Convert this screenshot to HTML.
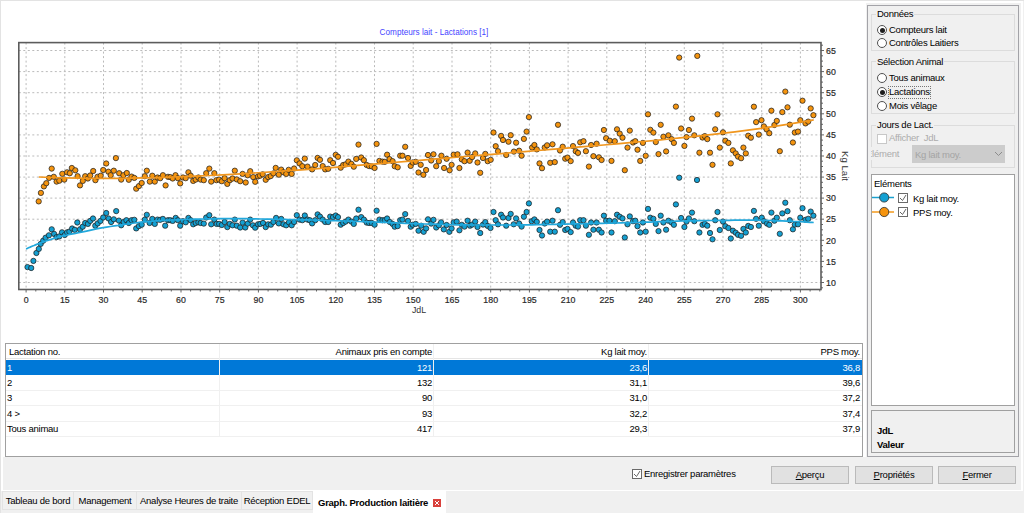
<!DOCTYPE html>
<html><head><meta charset="utf-8">
<style>
*{margin:0;padding:0;box-sizing:border-box}
html,body{width:1024px;height:513px;overflow:hidden;background:#f0f0f0;font-family:"Liberation Sans",sans-serif;font-size:9.5px;letter-spacing:-0.25px;color:#000;position:relative}
.a{position:absolute}
.t{position:absolute;white-space:nowrap;line-height:10px}
#chart{position:absolute;left:2px;top:2px;width:864px;height:455px;background:#fff}
#tbl{position:absolute;left:5px;top:343px;width:858px;height:114px;border:1px solid #a0a0a0;background:#fff}
.row{position:absolute;left:0;width:856px;height:15px;border-bottom:1px solid #f0f0f0}
.row span{position:absolute;top:2.5px;line-height:10px;white-space:nowrap}
.c0{left:3px}
.c1{right:430px}
.c2{right:215px}
.c3{right:2px}
.sel{background:#0078d7;color:#fff;border-bottom:none}
.vline{position:absolute;top:0;width:1px;height:90px;background:#f0f0f0}
.grp{position:absolute;border:1px solid #dcdcdc}
.gt{position:absolute;white-space:nowrap;line-height:10px;background:#f0f0f0;padding:0 1px}
.radio{position:absolute;width:10px;height:10px;border:1px solid #505050;border-radius:50%;background:#fff}
.radio.on::after{content:"";position:absolute;left:1.5px;top:1.5px;width:5px;height:5px;border-radius:50%;background:#1e1e1e}
.chk{position:absolute;width:10px;height:10px;border:1px solid #333;background:#fff}
.btn{position:absolute;top:466px;height:18px;width:78px;background:#e1e1e1;border:1px solid #bababa;text-align:center;line-height:16px;white-space:nowrap}
.tab{position:absolute;top:491px;height:19px;border:1px solid #e3e3e3;border-left:none;line-height:18px;white-space:nowrap;text-align:center}
</style></head><body>
<div class="a" style="left:0;top:0;width:1024px;height:1px;background:#e3e3e3"></div>
<div class="a" style="left:0;top:0;width:1px;height:513px;background:#e3e3e3"></div>
<div class="a" style="left:1px;top:1px;width:1022px;height:2px;background:#fff"></div>
<div class="a" style="left:1px;top:1px;width:2px;height:489px;background:#fff"></div>
<div class="a" style="left:1021px;top:1px;width:2px;height:489px;background:#fff"></div>
<div id="chart"><svg width="866" height="340" viewBox="0 0 866 340" style="position:absolute;left:-2px;top:-2px;letter-spacing:0"><path d="M26.1 42.6V289.5M64.8 42.6V289.5M103.5 42.6V289.5M142.2 42.6V289.5M181.0 42.6V289.5M219.7 42.6V289.5M258.4 42.6V289.5M297.1 42.6V289.5M335.8 42.6V289.5M374.5 42.6V289.5M413.2 42.6V289.5M452.0 42.6V289.5M490.7 42.6V289.5M529.4 42.6V289.5M568.1 42.6V289.5M606.8 42.6V289.5M645.5 42.6V289.5M684.3 42.6V289.5M723.0 42.6V289.5M761.7 42.6V289.5M800.4 42.6V289.5M18.8 282.5H821M18.8 261.4H821M18.8 240.3H821M18.8 219.2H821M18.8 198.1H821M18.8 177.1H821M18.8 156.0H821M18.8 134.9H821M18.8 113.8H821M18.8 92.7H821M18.8 71.6H821M18.8 50.5H821" stroke="#bababa" stroke-width="1" stroke-dasharray="2 2.5" fill="none"/><path d="M26.1 289.5v3M35.8 289.5v2M45.5 289.5v2M55.1 289.5v2M64.8 289.5v3M74.5 289.5v2M84.2 289.5v2M93.9 289.5v2M103.5 289.5v3M113.2 289.5v2M122.9 289.5v2M132.6 289.5v2M142.2 289.5v3M151.9 289.5v2M161.6 289.5v2M171.3 289.5v2M181.0 289.5v3M190.6 289.5v2M200.3 289.5v2M210.0 289.5v2M219.7 289.5v3M229.4 289.5v2M239.0 289.5v2M248.7 289.5v2M258.4 289.5v3M268.1 289.5v2M277.7 289.5v2M287.4 289.5v2M297.1 289.5v3M306.8 289.5v2M316.5 289.5v2M326.1 289.5v2M335.8 289.5v3M345.5 289.5v2M355.2 289.5v2M364.9 289.5v2M374.5 289.5v3M384.2 289.5v2M393.9 289.5v2M403.6 289.5v2M413.2 289.5v3M422.9 289.5v2M432.6 289.5v2M442.3 289.5v2M452.0 289.5v3M461.6 289.5v2M471.3 289.5v2M481.0 289.5v2M490.7 289.5v3M500.4 289.5v2M510.0 289.5v2M519.7 289.5v2M529.4 289.5v3M539.1 289.5v2M548.8 289.5v2M558.4 289.5v2M568.1 289.5v3M577.8 289.5v2M587.5 289.5v2M597.1 289.5v2M606.8 289.5v3M616.5 289.5v2M626.2 289.5v2M635.9 289.5v2M645.5 289.5v3M655.2 289.5v2M664.9 289.5v2M674.6 289.5v2M684.3 289.5v3M693.9 289.5v2M703.6 289.5v2M713.3 289.5v2M723.0 289.5v3M732.6 289.5v2M742.3 289.5v2M752.0 289.5v2M761.7 289.5v3M771.4 289.5v2M781.0 289.5v2M790.7 289.5v2M800.4 289.5v3M810.1 289.5v2M819.8 289.5v2M821 287.8h2M821 282.5h3M821 277.2h2M821 272.0h2M821 266.7h2M821 261.4h3M821 256.1h2M821 250.9h2M821 245.6h2M821 240.3h3M821 235.0h2M821 229.8h2M821 224.5h2M821 219.2h3M821 214.0h2M821 208.7h2M821 203.4h2M821 198.1h3M821 192.9h2M821 187.6h2M821 182.3h2M821 177.1h3M821 171.8h2M821 166.5h2M821 161.2h2M821 156.0h3M821 150.7h2M821 145.4h2M821 140.1h2M821 134.9h3M821 129.6h2M821 124.3h2M821 119.1h2M821 113.8h3M821 108.5h2M821 103.2h2M821 98.0h2M821 92.7h3M821 87.4h2M821 82.1h2M821 76.9h2M821 71.6h3M821 66.3h2M821 61.1h2M821 55.8h2M821 50.5h3M821 45.2h2" stroke="#666" stroke-width="1" fill="none"/><rect x="18.8" y="42.6" width="802.2" height="246.9" fill="none" stroke="#5c5c5c" stroke-width="1.6"/><g font-family="Liberation Sans, sans-serif" font-size="8.8" fill="#2a2a2a" stroke="#2a2a2a" stroke-width="0.2"><text x="26.1" y="302.6" text-anchor="middle">0</text><text x="64.8" y="302.6" text-anchor="middle">15</text><text x="103.5" y="302.6" text-anchor="middle">30</text><text x="142.2" y="302.6" text-anchor="middle">45</text><text x="181.0" y="302.6" text-anchor="middle">60</text><text x="219.7" y="302.6" text-anchor="middle">75</text><text x="258.4" y="302.6" text-anchor="middle">90</text><text x="297.1" y="302.6" text-anchor="middle">105</text><text x="335.8" y="302.6" text-anchor="middle">120</text><text x="374.5" y="302.6" text-anchor="middle">135</text><text x="413.2" y="302.6" text-anchor="middle">150</text><text x="452.0" y="302.6" text-anchor="middle">165</text><text x="490.7" y="302.6" text-anchor="middle">180</text><text x="529.4" y="302.6" text-anchor="middle">195</text><text x="568.1" y="302.6" text-anchor="middle">210</text><text x="606.8" y="302.6" text-anchor="middle">225</text><text x="645.5" y="302.6" text-anchor="middle">240</text><text x="684.3" y="302.6" text-anchor="middle">255</text><text x="723.0" y="302.6" text-anchor="middle">270</text><text x="761.7" y="302.6" text-anchor="middle">285</text><text x="800.4" y="302.6" text-anchor="middle">300</text><text x="826" y="285.7">10</text><text x="826" y="264.6">15</text><text x="826" y="243.5">20</text><text x="826" y="222.4">25</text><text x="826" y="201.3">30</text><text x="826" y="180.2">35</text><text x="826" y="159.2">40</text><text x="826" y="138.1">45</text><text x="826" y="117.0">50</text><text x="826" y="95.9">55</text><text x="826" y="74.8">60</text><text x="826" y="53.7">65</text></g><text x="419" y="312.5" text-anchor="middle" font-family="Liberation Sans, sans-serif" font-size="8.8" fill="#333">JdL</text><text transform="translate(841.5 166) rotate(90)" text-anchor="middle" font-family="Liberation Sans, sans-serif" font-size="9.6" fill="#333">Kg Lait</text><text x="434" y="35" text-anchor="middle" font-family="Liberation Sans, sans-serif" font-size="8.2" fill="#4646ff">Compteurs lait - Lactations [1]</text><g fill="#14a0d2" stroke="#202020" stroke-width="0.75"><circle cx="27.5" cy="267.1" r="2.65"/><circle cx="31.2" cy="268.0" r="2.65"/><circle cx="33.4" cy="260.9" r="2.65"/><circle cx="36.4" cy="253.0" r="2.65"/><circle cx="38.8" cy="248.9" r="2.65"/><circle cx="40.7" cy="243.9" r="2.65"/><circle cx="43.2" cy="240.7" r="2.65"/><circle cx="45.6" cy="237.7" r="2.65"/><circle cx="48.9" cy="235.3" r="2.65"/><circle cx="51.7" cy="229.3" r="2.65"/><circle cx="54.1" cy="233.9" r="2.65"/><circle cx="56.6" cy="237.1" r="2.65"/><circle cx="59.3" cy="236.4" r="2.65"/><circle cx="62.0" cy="232.3" r="2.65"/><circle cx="64.7" cy="235.0" r="2.65"/><circle cx="67.1" cy="232.3" r="2.65"/><circle cx="69.4" cy="231.6" r="2.65"/><circle cx="72.1" cy="228.5" r="2.65"/><circle cx="74.8" cy="229.8" r="2.65"/><circle cx="77.3" cy="222.5" r="2.65"/><circle cx="80.0" cy="229.3" r="2.65"/><circle cx="82.7" cy="226.7" r="2.65"/><circle cx="85.2" cy="223.0" r="2.65"/><circle cx="87.9" cy="223.9" r="2.65"/><circle cx="90.2" cy="220.9" r="2.65"/><circle cx="93.0" cy="218.5" r="2.65"/><circle cx="95.3" cy="225.7" r="2.65"/><circle cx="97.7" cy="223.4" r="2.65"/><circle cx="100.5" cy="220.9" r="2.65"/><circle cx="103.2" cy="217.5" r="2.65"/><circle cx="106.2" cy="213.0" r="2.65"/><circle cx="108.6" cy="218.5" r="2.65"/><circle cx="111.1" cy="222.0" r="2.65"/><circle cx="113.8" cy="219.3" r="2.65"/><circle cx="116.2" cy="211.1" r="2.65"/><circle cx="118.9" cy="220.6" r="2.65"/><circle cx="121.2" cy="225.3" r="2.65"/><circle cx="123.7" cy="222.0" r="2.65"/><circle cx="126.4" cy="220.2" r="2.65"/><circle cx="128.8" cy="223.0" r="2.65"/><circle cx="131.6" cy="220.2" r="2.65"/><circle cx="134.3" cy="219.8" r="2.65"/><circle cx="136.2" cy="228.4" r="2.65"/><circle cx="138.9" cy="226.1" r="2.65"/><circle cx="141.7" cy="224.7" r="2.65"/><circle cx="144.8" cy="219.6" r="2.65"/><circle cx="146.8" cy="214.8" r="2.65"/><circle cx="149.6" cy="223.0" r="2.65"/><circle cx="152.3" cy="218.9" r="2.65"/><circle cx="154.8" cy="223.9" r="2.65"/><circle cx="157.5" cy="219.6" r="2.65"/><circle cx="160.2" cy="219.8" r="2.65"/><circle cx="162.9" cy="218.9" r="2.65"/><circle cx="165.2" cy="225.7" r="2.65"/><circle cx="168.0" cy="220.2" r="2.65"/><circle cx="170.3" cy="220.2" r="2.65"/><circle cx="172.7" cy="220.9" r="2.65"/><circle cx="175.7" cy="217.9" r="2.65"/><circle cx="177.9" cy="220.2" r="2.65"/><circle cx="180.2" cy="225.7" r="2.65"/><circle cx="183.0" cy="221.2" r="2.65"/><circle cx="185.7" cy="222.3" r="2.65"/><circle cx="188.4" cy="217.9" r="2.65"/><circle cx="190.7" cy="220.2" r="2.65"/><circle cx="193.2" cy="224.3" r="2.65"/><circle cx="195.7" cy="223.0" r="2.65"/><circle cx="198.4" cy="222.3" r="2.65"/><circle cx="200.7" cy="223.0" r="2.65"/><circle cx="203.8" cy="223.6" r="2.65"/><circle cx="206.2" cy="217.5" r="2.65"/><circle cx="209.3" cy="215.2" r="2.65"/><circle cx="211.2" cy="224.3" r="2.65"/><circle cx="214.3" cy="219.6" r="2.65"/><circle cx="216.7" cy="223.9" r="2.65"/><circle cx="219.1" cy="223.9" r="2.65"/><circle cx="221.8" cy="225.0" r="2.65"/><circle cx="224.6" cy="222.0" r="2.65"/><circle cx="227.3" cy="227.1" r="2.65"/><circle cx="229.8" cy="223.9" r="2.65"/><circle cx="232.5" cy="225.3" r="2.65"/><circle cx="234.8" cy="219.6" r="2.65"/><circle cx="236.8" cy="225.7" r="2.65"/><circle cx="240.2" cy="227.5" r="2.65"/><circle cx="242.6" cy="222.6" r="2.65"/><circle cx="245.3" cy="227.5" r="2.65"/><circle cx="247.7" cy="223.6" r="2.65"/><circle cx="250.2" cy="219.6" r="2.65"/><circle cx="252.9" cy="225.3" r="2.65"/><circle cx="255.2" cy="227.7" r="2.65"/><circle cx="258.0" cy="224.3" r="2.65"/><circle cx="260.3" cy="223.9" r="2.65"/><circle cx="263.0" cy="223.0" r="2.65"/><circle cx="265.7" cy="227.1" r="2.65"/><circle cx="268.2" cy="224.3" r="2.65"/><circle cx="270.9" cy="224.7" r="2.65"/><circle cx="273.4" cy="222.0" r="2.65"/><circle cx="276.1" cy="217.9" r="2.65"/><circle cx="278.8" cy="223.4" r="2.65"/><circle cx="281.2" cy="218.9" r="2.65"/><circle cx="283.5" cy="224.3" r="2.65"/><circle cx="286.2" cy="225.3" r="2.65"/><circle cx="288.9" cy="222.3" r="2.65"/><circle cx="291.7" cy="225.3" r="2.65"/><circle cx="294.1" cy="222.0" r="2.65"/><circle cx="296.8" cy="215.2" r="2.65"/><circle cx="299.6" cy="219.6" r="2.65"/><circle cx="302.3" cy="220.2" r="2.65"/><circle cx="304.8" cy="215.5" r="2.65"/><circle cx="307.5" cy="219.6" r="2.65"/><circle cx="309.8" cy="220.2" r="2.65"/><circle cx="312.1" cy="223.4" r="2.65"/><circle cx="315.2" cy="220.2" r="2.65"/><circle cx="317.6" cy="214.4" r="2.65"/><circle cx="320.0" cy="216.6" r="2.65"/><circle cx="322.7" cy="219.6" r="2.65"/><circle cx="325.2" cy="222.0" r="2.65"/><circle cx="328.2" cy="222.0" r="2.65"/><circle cx="330.2" cy="216.6" r="2.65"/><circle cx="333.0" cy="217.1" r="2.65"/><circle cx="335.7" cy="215.5" r="2.65"/><circle cx="338.0" cy="217.1" r="2.65"/><circle cx="340.7" cy="224.7" r="2.65"/><circle cx="343.2" cy="223.0" r="2.65"/><circle cx="345.7" cy="221.6" r="2.65"/><circle cx="348.4" cy="219.6" r="2.65"/><circle cx="351.4" cy="221.6" r="2.65"/><circle cx="353.8" cy="223.9" r="2.65"/><circle cx="356.2" cy="218.5" r="2.65"/><circle cx="358.5" cy="209.7" r="2.65"/><circle cx="361.2" cy="217.1" r="2.65"/><circle cx="363.9" cy="219.6" r="2.65"/><circle cx="366.7" cy="222.6" r="2.65"/><circle cx="369.1" cy="223.0" r="2.65"/><circle cx="371.8" cy="223.0" r="2.65"/><circle cx="374.6" cy="224.7" r="2.65"/><circle cx="376.6" cy="210.7" r="2.65"/><circle cx="379.4" cy="219.6" r="2.65"/><circle cx="382.5" cy="220.2" r="2.65"/><circle cx="384.8" cy="220.2" r="2.65"/><circle cx="387.1" cy="218.5" r="2.65"/><circle cx="389.8" cy="222.0" r="2.65"/><circle cx="392.6" cy="223.9" r="2.65"/><circle cx="394.7" cy="226.7" r="2.65"/><circle cx="397.7" cy="226.1" r="2.65"/><circle cx="400.2" cy="220.2" r="2.65"/><circle cx="402.5" cy="219.6" r="2.65"/><circle cx="405.2" cy="214.1" r="2.65"/><circle cx="408.0" cy="220.9" r="2.65"/><circle cx="410.7" cy="226.7" r="2.65"/><circle cx="412.7" cy="224.7" r="2.65"/><circle cx="415.7" cy="223.9" r="2.65"/><circle cx="418.5" cy="230.7" r="2.65"/><circle cx="421.2" cy="225.7" r="2.65"/><circle cx="423.7" cy="231.8" r="2.65"/><circle cx="426.1" cy="228.4" r="2.65"/><circle cx="428.0" cy="219.3" r="2.65"/><circle cx="431.2" cy="223.6" r="2.65"/><circle cx="433.5" cy="219.8" r="2.65"/><circle cx="436.2" cy="227.5" r="2.65"/><circle cx="438.9" cy="225.3" r="2.65"/><circle cx="441.1" cy="222.3" r="2.65"/><circle cx="443.8" cy="229.4" r="2.65"/><circle cx="446.6" cy="225.0" r="2.65"/><circle cx="449.3" cy="231.8" r="2.65"/><circle cx="451.6" cy="228.4" r="2.65"/><circle cx="453.7" cy="222.3" r="2.65"/><circle cx="456.7" cy="221.6" r="2.65"/><circle cx="459.4" cy="230.3" r="2.65"/><circle cx="461.8" cy="224.8" r="2.65"/><circle cx="464.5" cy="226.6" r="2.65"/><circle cx="467.6" cy="220.7" r="2.65"/><circle cx="470.0" cy="225.7" r="2.65"/><circle cx="472.1" cy="224.6" r="2.65"/><circle cx="475.2" cy="221.6" r="2.65"/><circle cx="477.5" cy="227.0" r="2.65"/><circle cx="480.2" cy="233.0" r="2.65"/><circle cx="483.0" cy="224.6" r="2.65"/><circle cx="485.3" cy="222.1" r="2.65"/><circle cx="487.7" cy="225.9" r="2.65"/><circle cx="490.5" cy="228.0" r="2.65"/><circle cx="493.5" cy="212.0" r="2.65"/><circle cx="495.7" cy="220.2" r="2.65"/><circle cx="498.0" cy="224.3" r="2.65"/><circle cx="501.1" cy="214.7" r="2.65"/><circle cx="503.0" cy="217.5" r="2.65"/><circle cx="506.2" cy="225.7" r="2.65"/><circle cx="508.5" cy="218.0" r="2.65"/><circle cx="510.7" cy="213.9" r="2.65"/><circle cx="513.7" cy="224.3" r="2.65"/><circle cx="516.1" cy="218.4" r="2.65"/><circle cx="519.1" cy="223.5" r="2.65"/><circle cx="521.6" cy="226.6" r="2.65"/><circle cx="523.9" cy="216.7" r="2.65"/><circle cx="526.6" cy="212.0" r="2.65"/><circle cx="528.9" cy="203.4" r="2.65"/><circle cx="531.7" cy="221.2" r="2.65"/><circle cx="534.4" cy="219.4" r="2.65"/><circle cx="536.8" cy="221.8" r="2.65"/><circle cx="539.5" cy="230.0" r="2.65"/><circle cx="542.0" cy="235.5" r="2.65"/><circle cx="544.7" cy="223.5" r="2.65"/><circle cx="547.1" cy="221.6" r="2.65"/><circle cx="550.2" cy="231.7" r="2.65"/><circle cx="552.5" cy="220.7" r="2.65"/><circle cx="554.8" cy="231.7" r="2.65"/><circle cx="558.0" cy="210.2" r="2.65"/><circle cx="560.0" cy="224.8" r="2.65"/><circle cx="562.7" cy="222.1" r="2.65"/><circle cx="565.2" cy="230.0" r="2.65"/><circle cx="567.5" cy="228.9" r="2.65"/><circle cx="570.7" cy="232.1" r="2.65"/><circle cx="573.0" cy="222.5" r="2.65"/><circle cx="575.7" cy="225.7" r="2.65"/><circle cx="578.0" cy="226.6" r="2.65"/><circle cx="580.2" cy="220.2" r="2.65"/><circle cx="583.5" cy="220.2" r="2.65"/><circle cx="585.9" cy="225.7" r="2.65"/><circle cx="588.9" cy="234.8" r="2.65"/><circle cx="591.1" cy="222.5" r="2.65"/><circle cx="593.4" cy="229.7" r="2.65"/><circle cx="596.6" cy="222.5" r="2.65"/><circle cx="598.9" cy="229.7" r="2.65"/><circle cx="601.6" cy="232.5" r="2.65"/><circle cx="603.9" cy="215.7" r="2.65"/><circle cx="606.1" cy="220.7" r="2.65"/><circle cx="609.4" cy="220.7" r="2.65"/><circle cx="611.5" cy="232.5" r="2.65"/><circle cx="614.8" cy="221.2" r="2.65"/><circle cx="617.0" cy="214.7" r="2.65"/><circle cx="619.7" cy="216.7" r="2.65"/><circle cx="622.5" cy="218.4" r="2.65"/><circle cx="624.8" cy="237.5" r="2.65"/><circle cx="627.5" cy="224.3" r="2.65"/><circle cx="629.8" cy="216.4" r="2.65"/><circle cx="633.0" cy="221.2" r="2.65"/><circle cx="635.3" cy="220.7" r="2.65"/><circle cx="637.5" cy="226.2" r="2.65"/><circle cx="640.2" cy="232.5" r="2.65"/><circle cx="642.9" cy="222.5" r="2.65"/><circle cx="645.7" cy="231.7" r="2.65"/><circle cx="648.0" cy="208.9" r="2.65"/><circle cx="650.3" cy="217.7" r="2.65"/><circle cx="653.4" cy="218.8" r="2.65"/><circle cx="655.8" cy="223.9" r="2.65"/><circle cx="658.5" cy="231.1" r="2.65"/><circle cx="660.7" cy="215.7" r="2.65"/><circle cx="663.4" cy="222.5" r="2.65"/><circle cx="666.1" cy="229.7" r="2.65"/><circle cx="668.4" cy="220.7" r="2.65"/><circle cx="671.6" cy="222.5" r="2.65"/><circle cx="673.9" cy="224.8" r="2.65"/><circle cx="675.9" cy="204.4" r="2.65"/><circle cx="681.1" cy="218.0" r="2.65"/><circle cx="684.4" cy="227.0" r="2.65"/><circle cx="686.5" cy="221.6" r="2.65"/><circle cx="688.9" cy="218.4" r="2.65"/><circle cx="692.0" cy="212.6" r="2.65"/><circle cx="694.3" cy="221.2" r="2.65"/><circle cx="699.4" cy="232.5" r="2.65"/><circle cx="702.5" cy="224.8" r="2.65"/><circle cx="704.8" cy="223.9" r="2.65"/><circle cx="707.3" cy="225.7" r="2.65"/><circle cx="710.0" cy="233.0" r="2.65"/><circle cx="712.5" cy="239.3" r="2.65"/><circle cx="715.2" cy="220.2" r="2.65"/><circle cx="717.5" cy="212.0" r="2.65"/><circle cx="719.8" cy="230.0" r="2.65"/><circle cx="723.0" cy="221.6" r="2.65"/><circle cx="725.3" cy="226.2" r="2.65"/><circle cx="728.4" cy="228.0" r="2.65"/><circle cx="730.8" cy="238.5" r="2.65"/><circle cx="732.9" cy="230.7" r="2.65"/><circle cx="735.7" cy="232.7" r="2.65"/><circle cx="738.0" cy="234.8" r="2.65"/><circle cx="741.1" cy="235.8" r="2.65"/><circle cx="743.4" cy="228.9" r="2.65"/><circle cx="745.8" cy="232.5" r="2.65"/><circle cx="748.2" cy="225.9" r="2.65"/><circle cx="750.9" cy="227.0" r="2.65"/><circle cx="753.9" cy="210.9" r="2.65"/><circle cx="756.1" cy="218.8" r="2.65"/><circle cx="758.8" cy="225.7" r="2.65"/><circle cx="761.8" cy="217.7" r="2.65"/><circle cx="763.9" cy="221.2" r="2.65"/><circle cx="767.0" cy="223.5" r="2.65"/><circle cx="769.3" cy="224.8" r="2.65"/><circle cx="771.4" cy="212.6" r="2.65"/><circle cx="774.4" cy="220.7" r="2.65"/><circle cx="776.8" cy="217.7" r="2.65"/><circle cx="779.8" cy="233.8" r="2.65"/><circle cx="782.3" cy="213.4" r="2.65"/><circle cx="785.3" cy="202.7" r="2.65"/><circle cx="787.5" cy="211.2" r="2.65"/><circle cx="789.8" cy="220.2" r="2.65"/><circle cx="792.9" cy="229.3" r="2.65"/><circle cx="794.8" cy="224.6" r="2.65"/><circle cx="798.0" cy="224.3" r="2.65"/><circle cx="800.3" cy="217.7" r="2.65"/><circle cx="802.5" cy="208.2" r="2.65"/><circle cx="805.5" cy="219.8" r="2.65"/><circle cx="808.2" cy="218.8" r="2.65"/><circle cx="810.7" cy="211.6" r="2.65"/><circle cx="813.4" cy="215.7" r="2.65"/><circle cx="679.2" cy="177.7" r="2.65"/><circle cx="697.0" cy="180.0" r="2.65"/></g><g fill="#f5940e" stroke="#202020" stroke-width="0.75"><circle cx="38.7" cy="201.4" r="2.65"/><circle cx="40.9" cy="192.9" r="2.65"/><circle cx="43.9" cy="186.4" r="2.65"/><circle cx="46.3" cy="183.2" r="2.65"/><circle cx="49.1" cy="177.9" r="2.65"/><circle cx="51.7" cy="168.6" r="2.65"/><circle cx="53.8" cy="176.8" r="2.65"/><circle cx="56.6" cy="181.6" r="2.65"/><circle cx="59.3" cy="180.7" r="2.65"/><circle cx="62.3" cy="173.8" r="2.65"/><circle cx="64.3" cy="179.6" r="2.65"/><circle cx="67.1" cy="172.3" r="2.65"/><circle cx="69.8" cy="173.2" r="2.65"/><circle cx="71.8" cy="168.0" r="2.65"/><circle cx="75.3" cy="170.3" r="2.65"/><circle cx="77.6" cy="176.2" r="2.65"/><circle cx="80.0" cy="185.4" r="2.65"/><circle cx="82.8" cy="180.9" r="2.65"/><circle cx="85.2" cy="176.2" r="2.65"/><circle cx="87.9" cy="178.5" r="2.65"/><circle cx="90.2" cy="175.5" r="2.65"/><circle cx="93.2" cy="171.0" r="2.65"/><circle cx="95.4" cy="180.2" r="2.65"/><circle cx="97.5" cy="176.8" r="2.65"/><circle cx="100.7" cy="175.7" r="2.65"/><circle cx="103.2" cy="170.0" r="2.65"/><circle cx="106.2" cy="163.5" r="2.65"/><circle cx="108.4" cy="171.7" r="2.65"/><circle cx="110.7" cy="175.2" r="2.65"/><circle cx="113.8" cy="170.7" r="2.65"/><circle cx="115.9" cy="158.1" r="2.65"/><circle cx="119.2" cy="173.2" r="2.65"/><circle cx="121.2" cy="179.6" r="2.65"/><circle cx="123.4" cy="175.2" r="2.65"/><circle cx="126.8" cy="173.0" r="2.65"/><circle cx="128.8" cy="179.8" r="2.65"/><circle cx="131.6" cy="176.6" r="2.65"/><circle cx="134.3" cy="177.9" r="2.65"/><circle cx="136.2" cy="188.7" r="2.65"/><circle cx="138.9" cy="186.1" r="2.65"/><circle cx="141.7" cy="183.0" r="2.65"/><circle cx="144.8" cy="176.2" r="2.65"/><circle cx="146.8" cy="170.7" r="2.65"/><circle cx="149.8" cy="181.6" r="2.65"/><circle cx="152.3" cy="175.7" r="2.65"/><circle cx="154.8" cy="181.6" r="2.65"/><circle cx="157.5" cy="177.5" r="2.65"/><circle cx="160.2" cy="178.2" r="2.65"/><circle cx="162.9" cy="175.2" r="2.65"/><circle cx="165.6" cy="185.4" r="2.65"/><circle cx="168.0" cy="176.8" r="2.65"/><circle cx="170.3" cy="177.1" r="2.65"/><circle cx="172.7" cy="178.5" r="2.65"/><circle cx="175.5" cy="175.2" r="2.65"/><circle cx="177.9" cy="178.2" r="2.65"/><circle cx="180.2" cy="183.4" r="2.65"/><circle cx="183.0" cy="177.5" r="2.65"/><circle cx="185.7" cy="178.2" r="2.65"/><circle cx="188.4" cy="172.3" r="2.65"/><circle cx="190.7" cy="175.7" r="2.65"/><circle cx="193.2" cy="180.9" r="2.65"/><circle cx="195.7" cy="179.6" r="2.65"/><circle cx="198.4" cy="177.5" r="2.65"/><circle cx="200.7" cy="179.6" r="2.65"/><circle cx="203.8" cy="180.2" r="2.65"/><circle cx="206.2" cy="173.2" r="2.65"/><circle cx="209.3" cy="168.6" r="2.65"/><circle cx="211.2" cy="181.6" r="2.65"/><circle cx="214.3" cy="173.2" r="2.65"/><circle cx="216.4" cy="180.2" r="2.65"/><circle cx="219.1" cy="179.6" r="2.65"/><circle cx="221.8" cy="181.2" r="2.65"/><circle cx="224.6" cy="178.2" r="2.65"/><circle cx="227.3" cy="183.9" r="2.65"/><circle cx="229.8" cy="180.2" r="2.65"/><circle cx="232.5" cy="178.5" r="2.65"/><circle cx="234.8" cy="170.7" r="2.65"/><circle cx="236.8" cy="179.4" r="2.65"/><circle cx="240.2" cy="181.2" r="2.65"/><circle cx="242.6" cy="173.9" r="2.65"/><circle cx="245.7" cy="182.5" r="2.65"/><circle cx="247.7" cy="175.3" r="2.65"/><circle cx="250.2" cy="171.2" r="2.65"/><circle cx="253.2" cy="177.1" r="2.65"/><circle cx="255.2" cy="181.8" r="2.65"/><circle cx="258.0" cy="176.4" r="2.65"/><circle cx="260.0" cy="175.7" r="2.65"/><circle cx="262.7" cy="174.3" r="2.65"/><circle cx="265.7" cy="179.8" r="2.65"/><circle cx="268.2" cy="177.1" r="2.65"/><circle cx="270.7" cy="176.1" r="2.65"/><circle cx="273.4" cy="173.4" r="2.65"/><circle cx="275.7" cy="167.9" r="2.65"/><circle cx="278.8" cy="174.7" r="2.65"/><circle cx="281.2" cy="169.6" r="2.65"/><circle cx="283.5" cy="172.3" r="2.65"/><circle cx="286.2" cy="173.9" r="2.65"/><circle cx="288.7" cy="169.8" r="2.65"/><circle cx="291.7" cy="173.9" r="2.65"/><circle cx="294.1" cy="168.5" r="2.65"/><circle cx="296.8" cy="160.3" r="2.65"/><circle cx="299.6" cy="163.4" r="2.65"/><circle cx="302.3" cy="166.2" r="2.65"/><circle cx="304.8" cy="158.6" r="2.65"/><circle cx="307.5" cy="166.6" r="2.65"/><circle cx="312.1" cy="169.4" r="2.65"/><circle cx="315.2" cy="165.0" r="2.65"/><circle cx="317.6" cy="157.9" r="2.65"/><circle cx="320.0" cy="159.8" r="2.65"/><circle cx="322.7" cy="166.1" r="2.65"/><circle cx="325.2" cy="169.4" r="2.65"/><circle cx="328.2" cy="168.8" r="2.65"/><circle cx="330.2" cy="160.2" r="2.65"/><circle cx="333.0" cy="163.0" r="2.65"/><circle cx="335.7" cy="154.8" r="2.65"/><circle cx="338.0" cy="156.8" r="2.65"/><circle cx="340.7" cy="167.7" r="2.65"/><circle cx="343.2" cy="165.0" r="2.65"/><circle cx="345.7" cy="164.3" r="2.65"/><circle cx="348.4" cy="161.6" r="2.65"/><circle cx="351.4" cy="163.9" r="2.65"/><circle cx="353.8" cy="166.7" r="2.65"/><circle cx="356.2" cy="158.9" r="2.65"/><circle cx="358.5" cy="144.6" r="2.65"/><circle cx="361.2" cy="157.5" r="2.65"/><circle cx="363.9" cy="160.2" r="2.65"/><circle cx="366.7" cy="165.0" r="2.65"/><circle cx="369.1" cy="166.1" r="2.65"/><circle cx="371.8" cy="166.4" r="2.65"/><circle cx="374.6" cy="168.0" r="2.65"/><circle cx="376.6" cy="143.9" r="2.65"/><circle cx="379.4" cy="160.9" r="2.65"/><circle cx="382.5" cy="161.6" r="2.65"/><circle cx="384.8" cy="161.8" r="2.65"/><circle cx="387.1" cy="154.7" r="2.65"/><circle cx="389.5" cy="159.1" r="2.65"/><circle cx="392.6" cy="161.2" r="2.65"/><circle cx="394.7" cy="166.2" r="2.65"/><circle cx="397.7" cy="167.3" r="2.65"/><circle cx="400.2" cy="155.7" r="2.65"/><circle cx="402.5" cy="155.7" r="2.65"/><circle cx="405.2" cy="146.8" r="2.65"/><circle cx="408.0" cy="158.0" r="2.65"/><circle cx="410.7" cy="165.9" r="2.65"/><circle cx="412.7" cy="162.5" r="2.65"/><circle cx="415.7" cy="161.8" r="2.65"/><circle cx="418.5" cy="172.5" r="2.65"/><circle cx="420.7" cy="164.8" r="2.65"/><circle cx="423.4" cy="174.8" r="2.65"/><circle cx="426.1" cy="170.0" r="2.65"/><circle cx="428.0" cy="155.0" r="2.65"/><circle cx="431.2" cy="160.5" r="2.65"/><circle cx="433.5" cy="154.3" r="2.65"/><circle cx="436.2" cy="166.2" r="2.65"/><circle cx="438.9" cy="161.2" r="2.65"/><circle cx="441.4" cy="155.7" r="2.65"/><circle cx="444.1" cy="168.0" r="2.65"/><circle cx="446.6" cy="158.8" r="2.65"/><circle cx="449.6" cy="170.3" r="2.65"/><circle cx="451.6" cy="164.8" r="2.65"/><circle cx="453.7" cy="154.7" r="2.65"/><circle cx="457.5" cy="154.3" r="2.65"/><circle cx="459.4" cy="168.0" r="2.65"/><circle cx="461.8" cy="159.4" r="2.65"/><circle cx="464.5" cy="161.2" r="2.65"/><circle cx="467.6" cy="152.6" r="2.65"/><circle cx="469.7" cy="160.8" r="2.65"/><circle cx="472.1" cy="157.1" r="2.65"/><circle cx="475.2" cy="153.4" r="2.65"/><circle cx="477.5" cy="162.5" r="2.65"/><circle cx="480.2" cy="172.8" r="2.65"/><circle cx="483.0" cy="158.0" r="2.65"/><circle cx="485.3" cy="153.9" r="2.65"/><circle cx="487.7" cy="161.2" r="2.65"/><circle cx="490.7" cy="159.8" r="2.65"/><circle cx="493.5" cy="132.5" r="2.65"/><circle cx="495.7" cy="146.2" r="2.65"/><circle cx="498.0" cy="151.2" r="2.65"/><circle cx="501.1" cy="135.9" r="2.65"/><circle cx="503.0" cy="140.0" r="2.65"/><circle cx="506.2" cy="155.0" r="2.65"/><circle cx="508.5" cy="141.7" r="2.65"/><circle cx="510.7" cy="135.2" r="2.65"/><circle cx="513.9" cy="151.6" r="2.65"/><circle cx="516.1" cy="142.7" r="2.65"/><circle cx="519.1" cy="150.7" r="2.65"/><circle cx="521.6" cy="155.7" r="2.65"/><circle cx="523.9" cy="138.9" r="2.65"/><circle cx="526.6" cy="131.6" r="2.65"/><circle cx="528.9" cy="117.1" r="2.65"/><circle cx="532.1" cy="147.5" r="2.65"/><circle cx="534.4" cy="145.0" r="2.65"/><circle cx="536.8" cy="149.4" r="2.65"/><circle cx="539.5" cy="163.4" r="2.65"/><circle cx="542.0" cy="168.2" r="2.65"/><circle cx="544.7" cy="147.5" r="2.65"/><circle cx="547.1" cy="145.3" r="2.65"/><circle cx="550.2" cy="162.8" r="2.65"/><circle cx="552.5" cy="144.3" r="2.65"/><circle cx="554.8" cy="162.1" r="2.65"/><circle cx="558.0" cy="124.8" r="2.65"/><circle cx="560.0" cy="150.5" r="2.65"/><circle cx="562.7" cy="146.7" r="2.65"/><circle cx="565.2" cy="158.7" r="2.65"/><circle cx="567.5" cy="157.6" r="2.65"/><circle cx="570.7" cy="161.1" r="2.65"/><circle cx="573.0" cy="146.1" r="2.65"/><circle cx="575.7" cy="151.2" r="2.65"/><circle cx="578.0" cy="152.9" r="2.65"/><circle cx="580.2" cy="142.3" r="2.65"/><circle cx="583.5" cy="141.2" r="2.65"/><circle cx="585.9" cy="151.2" r="2.65"/><circle cx="588.9" cy="166.6" r="2.65"/><circle cx="591.1" cy="145.0" r="2.65"/><circle cx="593.4" cy="156.2" r="2.65"/><circle cx="596.6" cy="143.7" r="2.65"/><circle cx="598.9" cy="157.3" r="2.65"/><circle cx="601.6" cy="160.0" r="2.65"/><circle cx="603.9" cy="130.0" r="2.65"/><circle cx="606.1" cy="138.2" r="2.65"/><circle cx="609.8" cy="140.7" r="2.65"/><circle cx="611.5" cy="160.9" r="2.65"/><circle cx="614.8" cy="141.2" r="2.65"/><circle cx="617.0" cy="129.3" r="2.65"/><circle cx="619.7" cy="133.6" r="2.65"/><circle cx="622.5" cy="137.7" r="2.65"/><circle cx="624.8" cy="170.2" r="2.65"/><circle cx="627.5" cy="147.6" r="2.65"/><circle cx="629.8" cy="130.6" r="2.65"/><circle cx="633.0" cy="142.5" r="2.65"/><circle cx="635.3" cy="141.2" r="2.65"/><circle cx="637.5" cy="149.7" r="2.65"/><circle cx="640.2" cy="160.9" r="2.65"/><circle cx="642.9" cy="142.9" r="2.65"/><circle cx="645.7" cy="155.8" r="2.65"/><circle cx="648.0" cy="114.3" r="2.65"/><circle cx="650.3" cy="129.8" r="2.65"/><circle cx="653.4" cy="132.6" r="2.65"/><circle cx="655.8" cy="142.1" r="2.65"/><circle cx="658.5" cy="154.1" r="2.65"/><circle cx="660.7" cy="124.8" r="2.65"/><circle cx="663.4" cy="136.7" r="2.65"/><circle cx="666.1" cy="151.4" r="2.65"/><circle cx="668.4" cy="135.3" r="2.65"/><circle cx="671.6" cy="139.1" r="2.65"/><circle cx="673.9" cy="142.9" r="2.65"/><circle cx="675.9" cy="106.6" r="2.65"/><circle cx="681.1" cy="128.5" r="2.65"/><circle cx="679.2" cy="57.6" r="2.65"/><circle cx="697.3" cy="55.9" r="2.65"/><circle cx="753.9" cy="106.7" r="2.65"/><circle cx="684.4" cy="145.9" r="2.65"/><circle cx="686.5" cy="137.1" r="2.65"/><circle cx="688.9" cy="130.0" r="2.65"/><circle cx="692.0" cy="118.6" r="2.65"/><circle cx="694.3" cy="135.3" r="2.65"/><circle cx="699.4" cy="152.7" r="2.65"/><circle cx="702.5" cy="137.5" r="2.65"/><circle cx="704.8" cy="136.1" r="2.65"/><circle cx="707.3" cy="139.1" r="2.65"/><circle cx="710.0" cy="152.7" r="2.65"/><circle cx="712.5" cy="164.8" r="2.65"/><circle cx="715.2" cy="129.3" r="2.65"/><circle cx="717.5" cy="114.3" r="2.65"/><circle cx="719.8" cy="147.6" r="2.65"/><circle cx="723.0" cy="132.3" r="2.65"/><circle cx="725.3" cy="140.7" r="2.65"/><circle cx="728.4" cy="142.9" r="2.65"/><circle cx="730.8" cy="163.4" r="2.65"/><circle cx="732.9" cy="150.3" r="2.65"/><circle cx="735.7" cy="153.4" r="2.65"/><circle cx="738.0" cy="156.6" r="2.65"/><circle cx="741.1" cy="158.2" r="2.65"/><circle cx="743.4" cy="147.6" r="2.65"/><circle cx="745.8" cy="153.4" r="2.65"/><circle cx="748.2" cy="135.7" r="2.65"/><circle cx="750.9" cy="137.7" r="2.65"/><circle cx="756.1" cy="122.1" r="2.65"/><circle cx="758.8" cy="134.6" r="2.65"/><circle cx="761.5" cy="120.2" r="2.65"/><circle cx="763.9" cy="126.4" r="2.65"/><circle cx="766.6" cy="129.4" r="2.65"/><circle cx="769.3" cy="133.2" r="2.65"/><circle cx="771.4" cy="110.7" r="2.65"/><circle cx="774.4" cy="125.0" r="2.65"/><circle cx="776.8" cy="120.9" r="2.65"/><circle cx="779.8" cy="151.2" r="2.65"/><circle cx="782.3" cy="112.1" r="2.65"/><circle cx="785.3" cy="91.6" r="2.65"/><circle cx="787.5" cy="107.3" r="2.65"/><circle cx="789.8" cy="124.7" r="2.65"/><circle cx="792.9" cy="142.5" r="2.65"/><circle cx="794.8" cy="132.5" r="2.65"/><circle cx="798.0" cy="131.6" r="2.65"/><circle cx="800.3" cy="120.2" r="2.65"/><circle cx="802.5" cy="100.7" r="2.65"/><circle cx="805.5" cy="123.4" r="2.65"/><circle cx="808.2" cy="121.6" r="2.65"/><circle cx="810.7" cy="108.4" r="2.65"/><circle cx="813.4" cy="115.2" r="2.65"/></g><path d="M26.1 248.9 L27.2 248.4 L28.5 247.8 L30.2 247.1 L32.0 246.3 L34.0 245.5 L36.1 244.6 L38.3 243.7 L40.5 242.9 L42.8 242.1 L45.1 241.3 L47.6 240.4 L50.2 239.6 L52.9 238.7 L55.6 237.9 L58.3 237.1 L61.0 236.4 L63.8 235.7 L66.7 235.1 L69.6 234.4 L72.6 233.8 L75.5 233.3 L78.5 232.7 L81.3 232.1 L84.0 231.6 L86.5 231.1 L88.8 230.6 L90.9 230.1 L93.1 229.6 L95.3 229.2 L97.6 228.7 L100.2 228.2 L103.2 227.7 L106.6 227.1 L110.3 226.5 L114.3 225.9 L118.5 225.3 L122.7 224.6 L126.9 224.0 L130.9 223.5 L134.6 223.0 L138.0 222.6 L141.1 222.2 L144.1 221.9 L147.1 221.6 L150.0 221.3 L153.1 221.1 L156.4 220.8 L160.0 220.6 L163.9 220.4 L168.0 220.2 L172.3 220.0 L176.8 219.8 L181.3 219.6 L185.9 219.5 L190.5 219.3 L195.0 219.2 L199.5 219.1 L204.1 219.0 L208.7 218.9 L213.3 218.8 L218.0 218.7 L222.6 218.6 L227.3 218.6 L232.0 218.6 L236.7 218.6 L241.5 218.7 L246.2 218.7 L251.0 218.8 L255.8 218.9 L260.5 219.0 L265.3 219.1 L270.0 219.2 L274.7 219.3 L279.3 219.4 L283.9 219.4 L288.5 219.5 L293.1 219.6 L297.7 219.7 L302.3 219.8 L307.0 219.9 L311.7 220.0 L316.5 220.1 L321.2 220.3 L326.0 220.4 L330.8 220.6 L335.5 220.7 L340.3 220.9 L345.0 221.0 L349.7 221.2 L354.3 221.3 L358.9 221.5 L363.5 221.6 L368.1 221.8 L372.7 222.0 L377.3 222.1 L382.0 222.3 L386.7 222.5 L391.5 222.7 L396.2 222.9 L401.0 223.1 L405.8 223.3 L410.5 223.5 L415.3 223.6 L420.0 223.8 L424.7 224.0 L429.3 224.1 L433.9 224.2 L438.5 224.4 L443.1 224.5 L447.7 224.6 L452.3 224.7 L457.0 224.8 L461.7 224.9 L466.5 224.9 L471.2 225.0 L476.0 225.0 L480.8 225.0 L485.5 225.0 L490.3 225.0 L495.0 225.0 L499.7 225.0 L504.3 225.0 L508.9 225.0 L513.5 225.0 L518.1 224.9 L522.7 224.9 L527.3 224.9 L532.0 224.8 L536.7 224.7 L541.5 224.6 L546.2 224.5 L551.0 224.4 L555.8 224.3 L560.5 224.2 L565.3 224.1 L570.0 224.0 L574.7 223.9 L579.3 223.8 L583.9 223.7 L588.5 223.6 L593.1 223.5 L597.7 223.4 L602.3 223.3 L607.0 223.2 L611.7 223.1 L616.5 223.0 L621.2 222.8 L626.0 222.7 L630.8 222.6 L635.5 222.5 L640.3 222.3 L645.0 222.2 L649.7 222.1 L654.3 221.9 L658.9 221.7 L663.5 221.6 L668.1 221.4 L672.7 221.3 L677.3 221.1 L682.0 221.0 L686.7 220.9 L691.5 220.8 L696.2 220.7 L701.0 220.6 L705.8 220.6 L710.5 220.5 L715.3 220.5 L720.0 220.4 L724.7 220.3 L729.4 220.3 L734.1 220.2 L738.8 220.2 L743.5 220.2 L748.1 220.2 L752.6 220.2 L757.0 220.2 L761.4 220.3 L765.7 220.4 L770.1 220.5 L774.3 220.6 L778.5 220.8 L782.5 220.9 L786.3 221.1 L790.0 221.2 L793.6 221.4 L797.1 221.5 L800.6 221.7 L803.9 221.9 L807.0 222.1 L809.7 222.3 L811.9 222.4 L813.7 222.5" stroke="#22a8dc" stroke-width="1.7" fill="none"/><path d="M38.8 177.0 L51.9 177.5 L65.1 177.9 L78.2 178.1 L91.3 178.3 L104.5 178.3 L117.6 178.3 L130.7 178.1 L143.9 177.9 L157.0 177.6 L170.1 177.2 L183.3 176.7 L196.4 176.1 L209.5 175.5 L222.7 174.9 L235.8 174.1 L248.9 173.3 L262.1 172.5 L275.2 171.6 L288.3 170.7 L301.5 169.8 L314.6 168.8 L327.7 167.8 L340.9 166.8 L354.0 165.7 L367.1 164.7 L380.3 163.6 L393.4 162.5 L406.5 161.4 L419.7 160.3 L432.8 159.2 L446.0 158.1 L459.1 157.0 L472.2 155.9 L485.4 154.9 L498.5 153.8 L511.6 152.7 L524.8 151.6 L537.9 150.5 L551.0 149.4 L564.2 148.3 L577.3 147.2 L590.4 146.1 L603.6 145.0 L616.7 143.8 L629.8 142.7 L643.0 141.5 L656.1 140.3 L669.2 139.0 L682.4 137.7 L695.5 136.3 L708.6 134.9 L721.8 133.4 L734.9 131.8 L748.0 130.1 L761.2 128.3 L774.3 126.4 L787.4 124.4 L800.6 122.2 L813.7 119.9" stroke="#f0961e" stroke-width="1.7" fill="none"/></svg></div>
<div id="tbl">
 <div class="row" style="top:0;height:15px;border-bottom:1px solid #e5e5e5"><span class="c0" style="top:3px">Lactation no.</span><span class="c1" style="top:3px">Animaux pris en compte</span><span class="c2" style="top:3px">Kg lait moy.</span><span class="c3" style="top:3px">PPS moy.</span></div>
 <div class="row sel" style="top:16.0px;height:15.4px"><span class="c0" style="left:1px">1</span><span class="c1">121</span><span class="c2">23,6</span><span class="c3">36,8</span></div><div class="row" style="top:31.4px;height:15.4px"><span class="c0" style="left:1px">2</span><span class="c1">132</span><span class="c2">31,1</span><span class="c3">39,6</span></div><div class="row" style="top:46.8px;height:15.4px"><span class="c0" style="left:1px">3</span><span class="c1">90</span><span class="c2">31,0</span><span class="c3">37,2</span></div><div class="row" style="top:62.2px;height:15.4px"><span class="c0" style="left:1px">4 &gt;</span><span class="c1">93</span><span class="c2">32,2</span><span class="c3">37,4</span></div><div class="row" style="top:77.6px;height:15.4px"><span class="c0" style="left:1px">Tous animau</span><span class="c1">417</span><span class="c2">29,3</span><span class="c3">37,9</span></div>
 <div class="vline" style="left:213px;height:92px"></div><div class="vline" style="left:427px;height:92px"></div><div class="vline" style="left:642px;height:92px"></div>
</div>
<!-- right panel -->
<div class="a" style="left:867px;top:5px;width:152px;height:452px;border:1px solid #a3a3a8"></div>
<div class="grp" style="left:871px;top:14px;width:144px;height:37px"></div>
<div class="gt" style="left:876px;top:9px">Données</div>
<div class="radio on" style="left:877px;top:25px"></div><div class="t" style="left:889px;top:25px">Compteurs lait</div>
<div class="radio" style="left:877px;top:38px"></div><div class="t" style="left:889px;top:38px">Contrôles Laitiers</div>
<div class="grp" style="left:871px;top:61px;width:144px;height:53px"></div>
<div class="gt" style="left:876px;top:57px">Sélection Animal</div>
<div class="radio" style="left:877px;top:73px"></div><div class="t" style="left:889px;top:73px">Tous animaux</div>
<div class="radio on" style="left:877px;top:87px"></div><div class="t" style="left:889px;top:87px">Lactations</div>
<div class="a" style="left:888px;top:86px;width:43px;height:13px;border:1px dotted #777"></div>
<div class="radio" style="left:877px;top:101px"></div><div class="t" style="left:889px;top:101px">Mois vêlage</div>
<div class="grp" style="left:871px;top:125px;width:144px;height:43px"></div>
<div class="gt" style="left:876px;top:120px">Jours de Lact.</div>
<div class="chk" style="left:877px;top:134px;border-color:#c8c8c8"></div><div class="t" style="left:889px;top:133px;color:#acacac">Afficher &nbsp;JdL</div>
<div class="a" style="left:871px;top:147px;width:34px;height:13px;overflow:hidden;background:#f0f0f0"><div class="t" style="left:-5px;top:2px;color:#acacac">Elément</div></div>
<div class="a" style="left:912px;top:145px;width:93px;height:18px;background:#cccccc"></div>
<div class="t" style="left:915px;top:150px;color:#a4a4a4">Kg lait moy.</div>
<svg class="a" style="left:994px;top:151px" width="9" height="6"><path d="M1 1L4.5 4.5L8 1" stroke="#8c8c8c" fill="none" stroke-width="1"/></svg>
<div class="a" style="left:871px;top:174px;width:144px;height:232px;border:1px solid #a0a0a0;background:#fff"></div>
<div class="t" style="left:874px;top:179px">Eléments</div>
<svg class="a" style="left:872px;top:191px" width="40" height="30">
 <path d="M0 6.5H22" stroke="#1ba0cf" stroke-width="1.5"/><circle cx="12.2" cy="6.5" r="4.6" fill="#14a0d2" stroke="#2b2b2b" stroke-width="0.8"/>
 <path d="M0 21H22" stroke="#f39a1c" stroke-width="1.5"/><circle cx="12.2" cy="21" r="4.6" fill="#f5940e" stroke="#2b2b2b" stroke-width="0.8"/>
 <rect x="26.5" y="2.5" width="9" height="9" fill="#fff" stroke="#6a6a6a"/><path d="M28 7L30.5 9.5L34 4" stroke="#555" fill="none" stroke-width="0.9"/>
 <rect x="26.5" y="16.5" width="9" height="9" fill="#fff" stroke="#6a6a6a"/><path d="M28 21L30.5 23.5L34 18" stroke="#555" fill="none" stroke-width="0.9"/>
</svg>
<div class="t" style="left:913px;top:194px">Kg lait moy.</div>
<div class="t" style="left:913px;top:208px">PPS moy.</div>
<div class="a" style="left:871px;top:410px;width:144px;height:43px;border:1px solid #a0a0a0"></div>
<div class="t" style="left:877px;top:426px;font-weight:bold">JdL</div>
<div class="t" style="left:877px;top:440px;font-weight:bold">Valeur</div>
<!-- bottom bar -->
<svg class="a" style="left:632px;top:469px" width="11" height="11"><rect x="0.5" y="0.5" width="9" height="9" fill="#fff" stroke="#6a6a6a"/><path d="M2 5L4.5 7.5L8 2" stroke="#555" fill="none" stroke-width="0.9"/></svg>
<div class="t" style="left:644px;top:469px">Enregistrer paramètres</div>
<div class="btn" style="left:771px"><u>A</u>perçu</div>
<div class="btn" style="left:855px"><u>P</u>ropriétés</div>
<div class="btn" style="left:938px"><u>F</u>ermer</div>
<div class="a" style="left:1px;top:490px;width:1022px;height:1px;background:#fff"></div>
<div class="tab" style="left:2px;width:72px;border-left:1px solid #e3e3e3">Tableau de bord</div>
<div class="tab" style="left:74px;width:63px">Management</div>
<div class="tab" style="left:137px;width:105px">Analyse Heures de traite</div>
<div class="tab" style="left:242px;width:71px">Réception EDEL</div>
<div class="tab" style="left:313px;top:491px;height:22px;width:133px;background:#fff;border:none;font-weight:bold;padding-left:5px;text-align:left;line-height:23px">Graph. Production laitière</div>
<svg class="a" style="left:433px;top:499px" width="9" height="9"><rect width="8" height="8" fill="#d9413c"/><path d="M2 2L6 6M6 2L2 6" stroke="#fff" stroke-width="1"/></svg>
</body></html>
